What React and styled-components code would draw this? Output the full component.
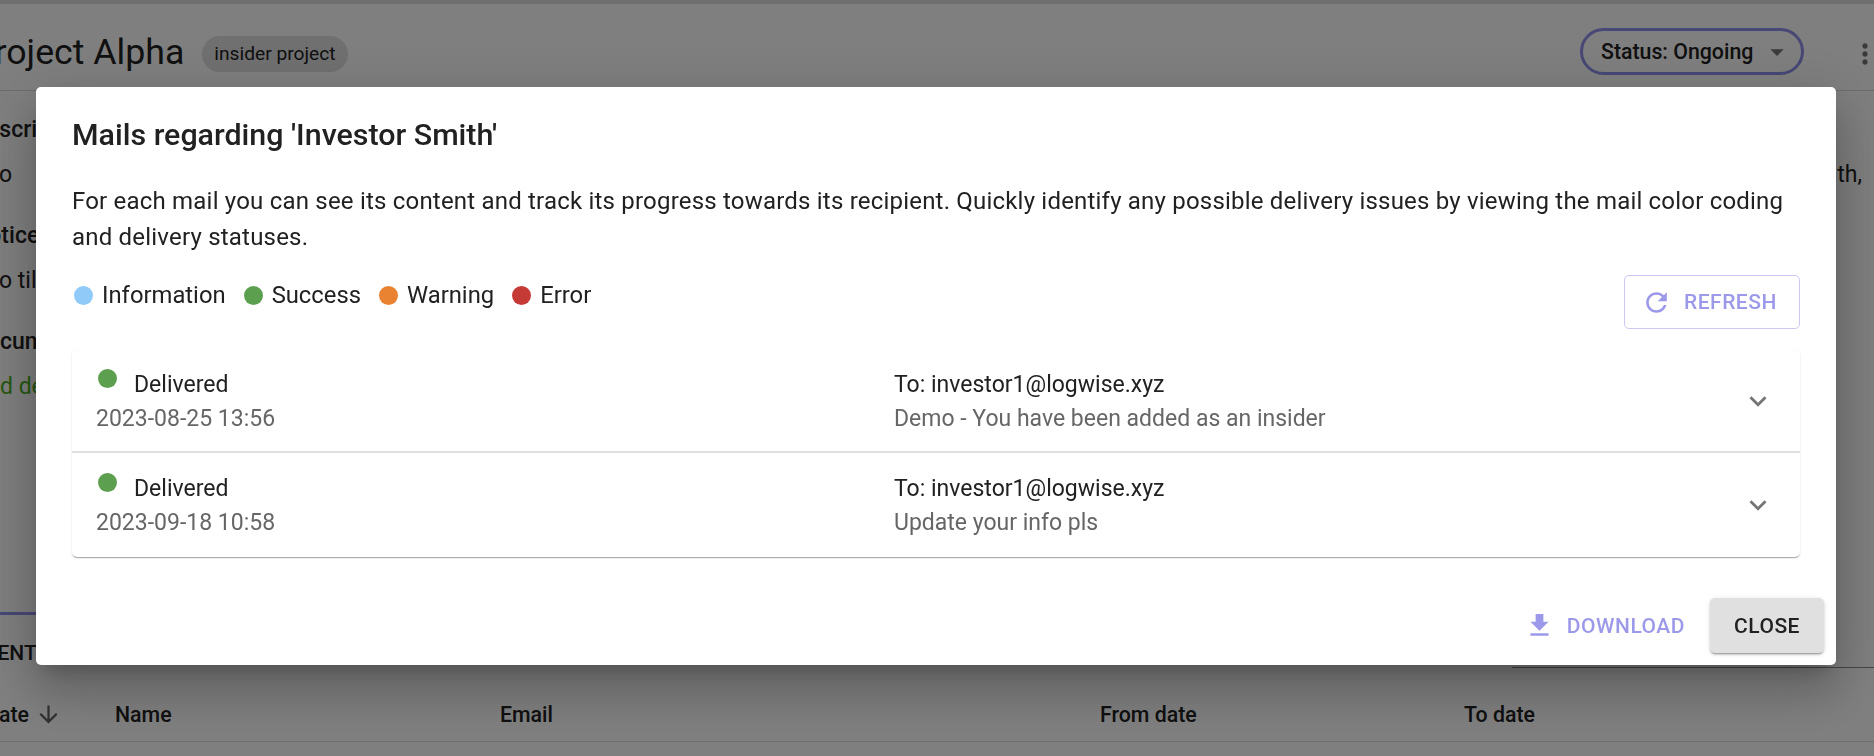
import React from 'react';
import styled, { createGlobalStyle } from 'styled-components';

const GlobalStyle = createGlobalStyle`
  html, body {
    margin: 0;
    height: 100%;
    overflow: hidden;
    background: #fff;
    font-family: Roboto, "Liberation Sans", sans-serif;
    color: #212121;
  }
`;

// page behind the dialog, scrolled a bit to the right
const Page = styled.div`
  width: 1902px;
  height: 756px;
  margin-left: -28px;
  border-top: 4px solid #dedede;
  box-sizing: border-box;
  overflow: hidden;
`;
const PageHeader = styled.header`
  display: flex;
  align-items: center;
  height: 87px;
  padding-top: 9px;
  box-sizing: border-box;
  border-bottom: 1px solid #d9d9d9;
`;
const ProjectTitle = styled.h1`
  margin: 0;
  font-size: 35.7px;
  font-weight: 400;
  line-height: 40px;
`;
const Chip = styled.span`
  display: inline-flex;
  align-items: center;
  height: 36px;
  margin: 4px 0 0 18px;
  padding: 0 12px;
  border-radius: 18px;
  background: #e0e0e0;
  font-size: 19.2px;
`;
const HeaderActions = styled.div`
  display: flex;
  align-items: center;
  gap: 45px;
  margin-left: auto;
  margin-right: -7px;
`;
const StatusSelect = styled.div`
  display: flex;
  align-items: center;
  width: 224px;
  height: 47px;
  padding: 0 18px;
  box-sizing: border-box;
  border: 3px solid #9090ee;
  border-radius: 24px;
  font-size: 21.3px;
  font-weight: 500;
`;
const Caret = styled.svg`
  width: 32px;
  height: 32px;
  margin-left: auto;
  margin-right: -10px;
  fill: #757575;
`;
const Kebab = styled.svg`
  width: 32px;
  height: 32px;
  margin-top: 4px;
  fill: #757575;
`;
const Details = styled.section`
  display: flex;
  flex-direction: column;
  height: 651px;
  padding-top: 21px;
  box-sizing: border-box;
`;
const DetailLabel = styled.div`
  height: 36px;
  font-size: 23px;
  font-weight: 500;
  line-height: 36px;
`;
const DetailRow = styled.div`
  display: flex;
  justify-content: space-between;
  height: 40px;
  margin: 9px 0 21px;
  padding-right: 12px;
  font-size: 23px;
  line-height: 36px;
  color: ${(p) => (p.$green ? '#4caf20' : '#212121')};
`;
const Tabs = styled.div`
  display: flex;
  height: 56px;
  margin-top: auto;
  align-items: center;
`;
const Tab = styled.div`
  font-size: 21px;
  font-weight: 500;
  height: 56px;
  line-height: 77px;
  width: 110px;
  border-top: 3px solid #9090ee;
  box-sizing: border-box;
`;
const TabLine = styled.div`
  align-self: flex-start;
  margin-left: auto;
  margin-top: 55px;
  width: 362px;
  height: 1px;
  background: #8a8a8a;
`;
const TableHead = styled.div`
  display: grid;
  grid-template-columns: 143px 385px 600px 364px 1fr;
  align-items: center;
  height: 74px;
  padding-top: 20px;
  box-sizing: border-box;
  border-bottom: 1px solid #e0e0e0;
  font-size: 21.3px;
  font-weight: 500;
`;
const HeadCell = styled.div`
  display: flex;
  align-items: center;
  gap: 6px;
  padding-left: ${(p) => (p.$first ? '13px' : '0')};
`;
const SortArrow = styled.svg`
  width: 27px;
  height: 27px;
  fill: #616161;
`;

// dialog
const Backdrop = styled.div`
  position: fixed;
  inset: 0;
  background: rgba(0, 0, 0, 0.5);
`;
const Dialog = styled.div`
  position: absolute;
  left: 36px;
  top: 87px;
  display: flex;
  flex-direction: column;
  width: 1800px;
  height: 578px;
  border-radius: 5px;
  background: #fff;
  box-shadow: 0 13px 18px -8px rgba(0, 0, 0, 0.2), 0 29px 46px 4px rgba(0, 0, 0, 0.14), 0 11px 55px 10px rgba(0, 0, 0, 0.12);
`;
const DialogBody = styled.div`
  flex: 1;
  padding: 0 36px;
`;
const DialogTitle = styled.h2`
  margin: 0;
  padding-top: 28px;
  font-size: 30.4px;
  font-weight: 500;
  line-height: 40px;
  color: #212121;
`;
const Intro = styled.p`
  margin: 0;
  padding-top: 28px;
  font-size: 24px;
  letter-spacing: 0.2px;
  line-height: 36px;
`;
const LegendBar = styled.div`
  display: flex;
  align-items: flex-start;
  justify-content: space-between;
  margin-top: 20px;
`;
const Legend = styled.div`
  display: flex;
  gap: 16px;
  height: 36px;
  margin-top: 2px;
  align-items: center;
`;
const LegendItem = styled.div`
  display: flex;
  align-items: center;
  gap: 9px;
  font-size: 23.8px;
`;
const Dot = styled.span`
  flex: none;
  width: 19px;
  height: 19px;
  margin-left: 2px;
  border-radius: 50%;
  background: ${(p) => p.$color};
`;
const RefreshButton = styled.button`
  display: flex;
  align-items: center;
  gap: 12px;
  width: 176px;
  height: 54px;
  padding: 0 16px;
  box-sizing: border-box;
  border: 1px solid #cbc8f6;
  border-radius: 5px;
  background: none;
  color: #9c99ea;
  font: 500 21px Roboto, sans-serif;
  letter-spacing: 0.5px;
`;
const ButtonIcon = styled.svg`
  flex: none;
  width: 31px;
  height: 31px;
  fill: currentColor;
`;
const MailList = styled.div`
  margin-top: 20px;
  border-radius: 5px;
  background: #fff;
  box-shadow: 0 2px 1px -1px rgba(0, 0, 0, 0.2), 0 1px 1px 0 rgba(0, 0, 0, 0.14), 0 1px 3px 0 rgba(0, 0, 0, 0.08);
`;
const MailRow = styled.div`
  display: grid;
  grid-template-columns: 798px 1fr 50px;
  align-items: start;
  height: 104px;
  padding: 19px 17px 0 24px;
  box-sizing: border-box;
  border-bottom: ${(p) => (p.$last ? 'none' : '2px solid #e0e0e0')};
`;
const MailCell = styled.div`
  display: flex;
  flex-direction: column;
`;
const StatusLine = styled.div`
  display: flex;
  align-items: flex-start;
  height: 34px;
  line-height: 34px;
  font-size: 23px;
`;
const StatusDot = styled(Dot)`
  margin: 1px 17px 0 2px;
`;
const MailLine = styled.div`
  height: 34px;
  line-height: 34px;
  font-size: 23px;
  color: ${(p) => (p.$muted ? '#666666' : '#212121')};
`;
const Chevron = styled.svg`
  width: 34px;
  height: 34px;
  margin-top: 16px;
  fill: #757575;
  justify-self: center;
`;
const DialogActions = styled.div`
  display: flex;
  align-items: center;
  justify-content: flex-end;
  gap: 25px;
  height: 55px;
  padding: 0 12px 12px 0;
`;
const DownloadButton = styled.button`
  display: flex;
  align-items: center;
  gap: 12px;
  padding: 0;
  border: 0;
  background: none;
  color: #9c99ea;
  font: 500 21px Roboto, sans-serif;
  letter-spacing: 0.5px;
`;
const CloseButton = styled.button`
  width: 114px;
  height: 55px;
  border: 0;
  border-radius: 5px;
  background: #e0e0e0;
  color: #212121;
  font: 500 21px Roboto, sans-serif;
  letter-spacing: 0.5px;
  box-shadow: 0 3px 1px -2px rgba(0, 0, 0, 0.2), 0 2px 2px 0 rgba(0, 0, 0, 0.14), 0 1px 5px 0 rgba(0, 0, 0, 0.12);
`;

const legend = [
  ['Information', '#90caf9'],
  ['Success', '#5c9f4f'],
  ['Warning', '#e98331'],
  ['Error', '#c63a36'],
];

const mails = [
  { date: '2023-08-25 13:56', subject: 'Demo - You have been added as an insider' },
  { date: '2023-09-18 10:58', subject: 'Update your info pls' },
];

const App = () => (
  <>
    <GlobalStyle />
    <Page>
      <PageHeader>
        <ProjectTitle>Project Alpha</ProjectTitle>
        <Chip>insider project</Chip>
        <HeaderActions>
          <StatusSelect>
            Status: Ongoing
            <Caret viewBox="0 0 24 24"><path d="M7 10l5 5 5-5z" /></Caret>
          </StatusSelect>
          <Kebab viewBox="0 0 24 24">
            <path d="M12 8c1.1 0 2-.9 2-2s-.9-2-2-2-2 .9-2 2 .9 2 2 2zm0 2c-1.1 0-2 .9-2 2s.9 2 2 2 2-.9 2-2-.9-2-2-2zm0 6c-1.1 0-2 .9-2 2s.9 2 2 2 2-.9 2-2-.9-2-2-2z" />
          </Kebab>
        </HeaderActions>
      </PageHeader>
      <Details>
        <DetailLabel>Description</DetailLabel>
        <DetailRow><span>Info</span><span>month,</span></DetailRow>
        <DetailLabel>Notice</DetailLabel>
        <DetailRow><span>Info till</span></DetailRow>
        <DetailLabel>Documents</DetailLabel>
        <DetailRow $green><span>Add de</span></DetailRow>
        <Tabs>
          <Tab>EVENTS</Tab>
          <TabLine />
        </Tabs>
        <TableHead>
          <HeadCell $first>Date <SortArrow viewBox="0 0 24 24"><path d="M20 12l-1.41-1.41L13 16.17V4h-2v12.17l-5.58-5.59L4 12l8 8 8-8z" /></SortArrow></HeadCell>
          <HeadCell>Name</HeadCell>
          <HeadCell>Email</HeadCell>
          <HeadCell>From date</HeadCell>
          <HeadCell>To date</HeadCell>
        </TableHead>
      </Details>
    </Page>
    <Backdrop>
      <Dialog>
        <DialogBody>
          <DialogTitle>Mails regarding 'Investor Smith'</DialogTitle>
          <Intro>
            For each mail you can see its content and track its progress towards its recipient. Quickly identify any possible delivery issues by viewing the mail color coding and delivery statuses.
          </Intro>
          <LegendBar>
            <Legend>
              {legend.map(([label, color]) => (
                <LegendItem key={label}>
                  <Dot $color={color} />
                  {label}
                </LegendItem>
              ))}
            </Legend>
            <RefreshButton>
              <ButtonIcon viewBox="0 0 24 24">
                <path d="M17.65 6.35C16.2 4.9 14.21 4 12 4c-4.42 0-7.99 3.58-7.99 8s3.57 8 7.99 8c3.73 0 6.84-2.55 7.73-6h-2.08c-.82 2.33-3.04 4-5.65 4-3.31 0-6-2.69-6-6s2.69-6 6-6c1.66 0 3.14.69 4.22 1.78L13 11h7V4l-2.35 2.35z" />
              </ButtonIcon>
              REFRESH
            </RefreshButton>
          </LegendBar>
          <MailList>
            {mails.map((mail, ix) => (
              <MailRow $last={ix === mails.length - 1} key={`mail-${ix}`}>
                <MailCell>
                  <StatusLine><StatusDot $color="#5c9f4f" />Delivered</StatusLine>
                  <MailLine $muted>{mail.date}</MailLine>
                </MailCell>
                <MailCell>
                  <MailLine>To: investor1@logwise.xyz</MailLine>
                  <MailLine $muted>{mail.subject}</MailLine>
                </MailCell>
                <Chevron viewBox="0 0 24 24"><path d="M16.59 8.59 12 13.17 7.41 8.59 6 10l6 6 6-6z" /></Chevron>
              </MailRow>
            ))}
          </MailList>
        </DialogBody>
        <DialogActions>
          <DownloadButton>
            <ButtonIcon viewBox="0 0 24 24"><path d="M5 20h14v-2H5v2zM19 9h-4V3H9v6H5l7 7 7-7z" /></ButtonIcon>
            DOWNLOAD
          </DownloadButton>
          <CloseButton>CLOSE</CloseButton>
        </DialogActions>
      </Dialog>
    </Backdrop>
  </>
);

export default App;
